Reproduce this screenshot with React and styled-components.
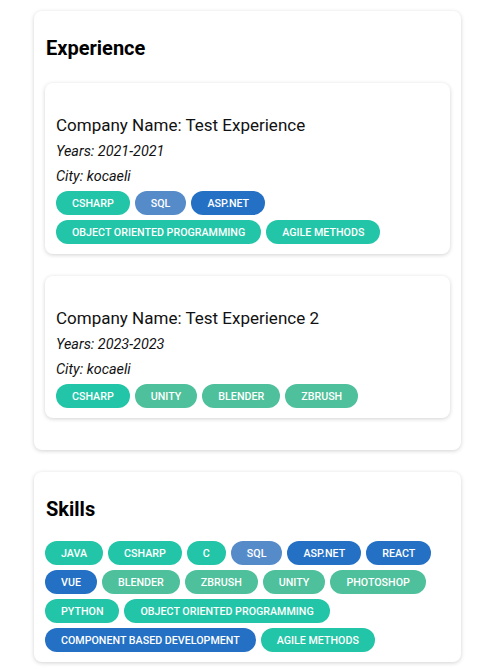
import React from "react";
import styled, { createGlobalStyle } from "styled-components";

const GlobalStyle = createGlobalStyle`
  body {
    margin: 0;
    background: #fff;
    font-family: Roboto, "Liberation Sans", sans-serif;
  }
`;

const colors = {
  teal: "#22c5a7",
  green: "#4ec09b",
  sky: "#568bc9",
  blue: "#2470c4",
};

const experiences = [
  {
    company: "Test Experience",
    years: "2021-2021",
    city: "kocaeli",
    skills: [
      ["CSHARP", "teal"],
      ["SQL", "sky"],
      ["ASP.NET", "blue"],
      ["OBJECT ORIENTED PROGRAMMING", "teal"],
      ["AGILE METHODS", "teal"],
    ],
  },
  {
    company: "Test Experience 2",
    years: "2023-2023",
    city: "kocaeli",
    skills: [
      ["CSHARP", "teal"],
      ["UNITY", "green"],
      ["BLENDER", "green"],
      ["ZBRUSH", "green"],
    ],
  },
];

const skills = [
  ["JAVA", "teal"],
  ["CSHARP", "teal"],
  ["C", "teal"],
  ["SQL", "sky"],
  ["ASP.NET", "blue"],
  ["REACT", "blue"],
  ["VUE", "blue"],
  ["BLENDER", "green"],
  ["ZBRUSH", "green"],
  ["UNITY", "green"],
  ["PHOTOSHOP", "green"],
  ["PYTHON", "teal"],
  ["OBJECT ORIENTED PROGRAMMING", "teal"],
  ["COMPONENT BASED DEVELOPMENT", "blue"],
  ["AGILE METHODS", "teal"],
];

const App = () => {
  return (
    <>
      <GlobalStyle />
      <Page>
        <Section>
          <Title>Experience</Title>
          <List>
            {experiences.map((exp) => (
              <ExpCard key={exp.company}>
                <Company>Company Name: {exp.company}</Company>
                <Meta>Years: {exp.years}</Meta>
                <Meta>City: {exp.city}</Meta>
                <Chips $inCard>
                  {exp.skills.map(([name, tone]) => (
                    <Chip key={name} $tone={tone}>
                      {name}
                    </Chip>
                  ))}
                </Chips>
              </ExpCard>
            ))}
          </List>
        </Section>

        <Section $compact>
          <Title $tight>Skills</Title>
          <Chips>
            {skills.map(([name, tone]) => (
              <Chip key={name} $tone={tone}>
                {name}
              </Chip>
            ))}
          </Chips>
        </Section>
      </Page>
    </>
  );
};

const Page = styled.div`
  display: flex;
  flex-direction: column;
  gap: 22px;
  padding: 11px 33px 8px 34px;
`;

const Section = styled.div`
  background: #fff;
  border-radius: 8px;
  box-shadow: 0 1px 4px rgba(0, 0, 0, 0.18);
  padding: 25px 11px ${(p) => (p.$compact ? "10px" : "32px")};
`;

const Title = styled.h2`
  margin: 0 0 ${(p) => (p.$tight ? "20px" : "23px")} 1px;
  font-size: 20px;
  line-height: 24px;
  font-weight: 700;
  color: #000;
`;

const List = styled.div`
  display: flex;
  flex-direction: column;
  gap: 22px;
`;

const ExpCard = styled.div`
  display: flex;
  flex-direction: column;
  gap: 5px;
  border-radius: 8px;
  box-shadow: 0 1px 4px rgba(0, 0, 0, 0.18);
  padding: 30px 11px 10px;
`;

const Company = styled.div`
  font-size: 17px;
  line-height: 24px;
  color: #111;
`;

const Meta = styled.div`
  font-size: 14.4px;
  line-height: 20px;
  font-style: italic;
  color: #111;
`;

const Chips = styled.div`
  display: flex;
  flex-wrap: wrap;
  gap: 5px;
  margin-top: ${(p) => (p.$inCard ? "-1px" : "0")};
`;

const Chip = styled.span`
  display: inline-flex;
  align-items: center;
  height: 24px;
  padding: 0 16px;
  border-radius: 12px;
  background: ${(p) => colors[p.$tone]};
  color: #fff;
  font-size: 10.7px;
  font-weight: 500;
  white-space: nowrap;
`;

export default App;
